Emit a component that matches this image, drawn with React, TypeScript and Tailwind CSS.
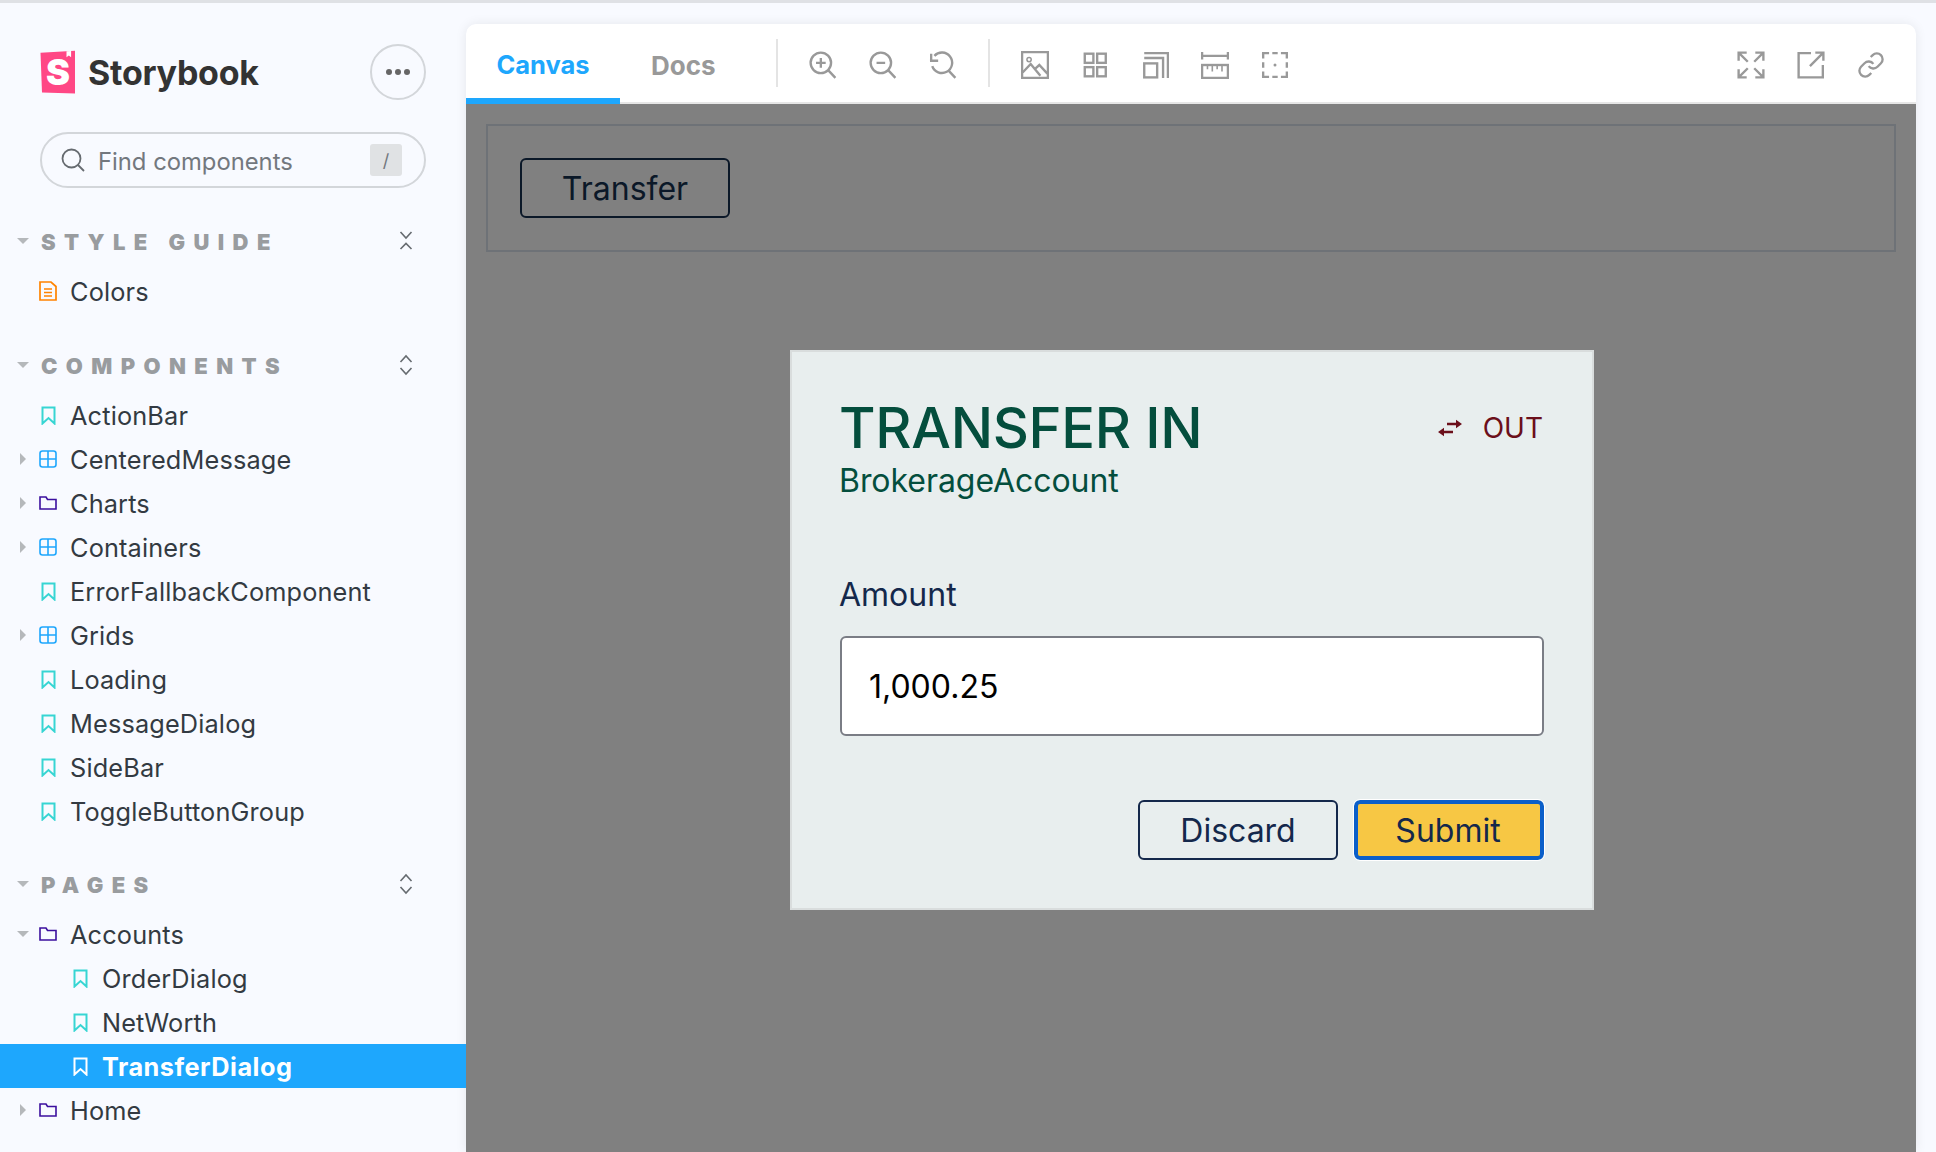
import type { ReactNode } from 'react';

const inter = { fontFamily: 'Inter, sans-serif' };

function Svg({ children }: { children: ReactNode }) {
  return (
    <svg width="28" height="28" viewBox="0 0 26 26" fill="none" stroke="currentColor" strokeWidth="2.2" className="shrink-0">
      {children}
    </svg>
  );
}

function Bookmark({ white }: { white?: boolean }) {
  return (
    <svg width="15" height="19" viewBox="0 0 15 19" fill="none" stroke={white ? '#ffffff' : '#37d5d3'} strokeWidth="2" className="shrink-0">
      <path d="M1.500 1.500h12v16l-6-5.500-6 5.500z" />
    </svg>
  );
}

function Component() {
  return (
    <svg width="18" height="18" viewBox="0 0 18 18" fill="none" stroke="#1ea7fd" strokeWidth="1.600" className="shrink-0">
      <rect x="1" y="1" width="16" height="16" rx="2.500" />
      <path d="M9 1v16M1 9h16" />
    </svg>
  );
}

function Folder() {
  return (
    <svg width="18" height="16" viewBox="0 0 18 16" fill="none" stroke="#3b0f9e" strokeWidth="1.600" className="shrink-0">
      <path d="M1 2h6l1.500 2.500H17V14H1z" />
    </svg>
  );
}

function Doc() {
  return (
    <svg width="18" height="20" viewBox="0 0 18 20" fill="none" stroke="#ff8300" strokeWidth="1.700" className="shrink-0">
      <path d="M1 1h11l5 4.500V19H1z" />
      <path d="M5 8h8M5 11.500h8M5 15h8" />
    </svg>
  );
}

function Caret({ open }: { open?: boolean }) {
  if (open) {
    return <span className="block w-0 h-0 border-x-[6px] border-x-transparent border-t-[6px] border-t-[#b5b8bb]" />;
  }
  return <span className="block w-0 h-0 border-y-[6px] border-y-transparent border-l-[6px] border-l-[#b5b8bb]" />;
}

type Row = { label: string; kind: 'story' | 'component' | 'folder' | 'doc'; caret?: boolean; open?: boolean; child?: boolean; active?: boolean };

function TreeRow({ row }: { row: Row }) {
  return (
    <div className={`h-[44px] flex items-center relative ${row.active ? 'bg-[#1ea7fd] text-white font-bold tracking-[0.5px]' : 'text-[#333a42] tracking-[0.15px]'} ${row.child ? 'pl-[71px]' : 'pl-[39px]'}`}>
      {row.caret && (
        <span className="absolute left-[17px] top-0 bottom-0 w-[12px] flex items-center justify-center">
          <Caret open={row.open} />
        </span>
      )}
      <span className="w-[18px] flex justify-center">
        {row.kind === 'story' && <Bookmark white={row.active} />}
        {row.kind === 'component' && <Component />}
        {row.kind === 'folder' && <Folder />}
        {row.kind === 'doc' && <Doc />}
      </span>
      <span className="ml-[13px] pt-[1px] text-[25.3px]">{row.label}</span>
    </div>
  );
}

function SectionHeader({ label, collapse }: { label: string; collapse?: boolean }) {
  return (
    <div className="h-[44px] flex items-center relative pl-[41px] pr-[53px] justify-between">
      <span className="absolute left-[17px] top-[18px]">
        <Caret open />
      </span>
      <span className="text-[22px] font-black text-[#999c9f] tracking-[8.4px] whitespace-pre">{label}</span>
      <svg width="14" height="22" viewBox="0 0 14 22" fill="none" stroke="#666b70" strokeWidth="1.600" className="shrink-0 -mt-[3px]">
        {collapse ? <path d="M1.500 2l5.500 6 5.500-6M1.500 19l5.500-5.500 5.500 5.500" /> : <path d="M1.500 8l5.500-6 5.500 6M1.500 14l5.500 6 5.500-6" />}
      </svg>
    </div>
  );
}

const components: Row[] = [
  { label: 'ActionBar', kind: 'story' },
  { label: 'CenteredMessage', kind: 'component', caret: true },
  { label: 'Charts', kind: 'folder', caret: true },
  { label: 'Containers', kind: 'component', caret: true },
  { label: 'ErrorFallbackComponent', kind: 'story' },
  { label: 'Grids', kind: 'component', caret: true },
  { label: 'Loading', kind: 'story' },
  { label: 'MessageDialog', kind: 'story' },
  { label: 'SideBar', kind: 'story' },
  { label: 'ToggleButtonGroup', kind: 'story' },
];

const pages: Row[] = [
  { label: 'Accounts', kind: 'folder', caret: true, open: true },
  { label: 'OrderDialog', kind: 'story', child: true },
  { label: 'NetWorth', kind: 'story', child: true },
  { label: 'TransferDialog', kind: 'story', child: true, active: true },
  { label: 'Home', kind: 'folder', caret: true },
];

function Sidebar() {
  return (
    <aside className="w-[466px] shrink-0 pt-[41px]">
      <div className="flex items-center justify-between pl-[40px] pr-[40px] h-[56px]">
        <div className="flex items-center gap-[12px]">
          <svg width="36" height="44" viewBox="0 0 36 44" className="shrink-0">
            <path d="M0.500 2.800 35 0.800V43.500L2 42.500z" fill="#ff4785" />
            <path d="M26.500 1.300v6l2.300-1.800 2.300 1.800V1z" fill="#ffffff" />
            <text x="18" y="35" textAnchor="middle" fontSize="36" fontWeight="900" fill="#ffffff" fontFamily="Inter, sans-serif">S</text>
          </svg>
          <span className="text-[34px] font-bold tracking-[-0.25px] text-[#333333]">Storybook</span>
        </div>
        <div className="w-[56px] h-[56px] rounded-full border-2 border-[#d3d6da] flex items-center justify-center gap-[3px]">
          <span className="w-[6px] h-[6px] rounded-full bg-[#666666]" />
          <span className="w-[6px] h-[6px] rounded-full bg-[#666666]" />
          <span className="w-[6px] h-[6px] rounded-full bg-[#666666]" />
        </div>
      </div>

      <div className="mx-[40px] mt-[32px] h-[56px] rounded-full border-2 border-[#d3d6da] flex items-center pl-[19px] pr-[22px]">
        <svg width="24" height="24" viewBox="0 0 24 24" fill="none" stroke="#666b70" strokeWidth="1.800" className="shrink-0">
          <circle cx="10.500" cy="10.500" r="9" />
          <path d="M17 17l6 6" />
        </svg>
        <span className="ml-[13px] pt-[3px] flex-1 text-[23.800px] text-[#73787e]">Find components</span>
        <span className="w-[32px] h-[32px] rounded-[3px] bg-[#e0e2e4] flex items-center justify-center text-[18px] text-[#73787e]">/</span>
      </div>

      <div className="mt-[32px]">
        <SectionHeader label="STYLE GUIDE" collapse />
      </div>
      <div className="mt-[5px]">
        <TreeRow row={{ label: 'Colors', kind: 'doc' }} />
      </div>

      <div className="mt-[31px]">
        <SectionHeader label="COMPONENTS" />
      </div>
      <div className="mt-[5px]">
        {components.map((row) => (
          <TreeRow key={row.label} row={row} />
        ))}
      </div>

      <div className="mt-[30px]">
        <SectionHeader label="PAGES" />
      </div>
      <div className="mt-[5px]">
        {pages.map((row) => (
          <TreeRow key={row.label} row={row} />
        ))}
      </div>
    </aside>
  );
}

function Toolbar() {
  return (
    <div className="h-[80px] shrink-0 bg-white rounded-t-[10px] border-b-[2px] border-[#e6e6e6] flex items-stretch text-[#999999]">
      <div className="w-[154px] -mb-[2px] border-b-[6px] border-[#1ea7fd] pt-[8px] flex items-center justify-center text-[25.500px] font-bold text-[#1ea7fd]">Canvas</div>
      <div className="w-[156px] flex items-center pl-[31px] pt-[5px] text-[26px] font-bold">Docs</div>
      <div className="w-[2px] h-[48px] bg-[#e4e4e4] self-center" />
      <div className="flex items-center gap-[32px] ml-[31px] pt-[3px]">
        <Svg>
          <circle cx="11" cy="11" r="9.500" />
          <path d="M18 18l6.500 7M11 6.500v9M6.500 11h9" />
        </Svg>
        <Svg>
          <circle cx="11" cy="11" r="9.500" />
          <path d="M18 18l6.500 7M7 11h8" />
        </Svg>
        <Svg>
          <path d="M5 4.500A9.500 9.500 0 1 1 3 14" />
          <path d="M18 18l6.500 7" />
          <path d="M2 2.500v6.500h6.500" />
        </Svg>
      </div>
      <div className="w-[2px] h-[48px] bg-[#e4e4e4] self-center ml-[31px]" />
      <div className="flex items-center gap-[32px] ml-[31px] pt-[3px]">
        <Svg>
          <rect x="1" y="1" width="24" height="24" />
          <circle cx="7.500" cy="8" r="2" strokeWidth="1.400" />
          <path d="M1.500 20 9 12l9 11M13 16.500l4-3.500 7.500 8" />
        </Svg>
        <Svg>
          <rect x="3.500" y="2.500" width="8" height="8.500" />
          <rect x="15" y="2.500" width="8" height="8.500" />
          <rect x="3.500" y="15" width="8" height="8.500" />
          <rect x="15" y="15" width="8" height="8.500" />
        </Svg>
        <Svg>
          <rect x="3" y="11.500" width="12" height="13" />
          <path d="M3 6.500h17.500V25M3 2h22v23" />
        </Svg>
        <Svg>
          <path d="M1 1v7M25 1v7" />
          <path d="M1 4.500h24" />
          <rect x="1" y="13" width="24" height="12" />
          <path d="M6 13v4M10.500 13v6M15 13v4M19.500 13v6" strokeWidth="1.500" />
        </Svg>
        <Svg>
          <path d="M7.500 2H2v5M18.500 2H24v5M2 10.500v5M24 10.500v5M2 19v5h5.500M24 19v5h-5.500M10.500 2h5M10.500 24h5" />
          <circle cx="13" cy="13" r="1.400" fill="currentColor" stroke="none" />
        </Svg>
      </div>
      <div className="flex-1" />
      <div className="flex items-center gap-[32px] pr-[31px] pt-[3px]">
        <Svg>
          <path d="M1.500 9V1.500H9M1.500 1.500 10 10M24.500 9V1.500H17M24.500 1.500 16 10M1.500 17v7.500H9M1.500 24.500 10 16M24.500 17v7.500H17M24.500 24.500 16 16" />
        </Svg>
        <Svg>
          <path d="M13 2H1.500v22.500H24V13M17 1.500h7.500V9M24 2 12 14" />
        </Svg>
        <svg width="28" height="28" viewBox="0 0 24 24" fill="none" stroke="currentColor" strokeWidth="2" className="shrink-0">
          <path d="M10 13a5 5 0 0 0 7.540.54l3-3a5 5 0 0 0-7.070-7.070l-1.720 1.710" />
          <path d="M14 11a5 5 0 0 0-7.540-.54l-3 3a5 5 0 0 0 7.070 7.070l1.710-1.710" />
        </svg>
      </div>
    </div>
  );
}

function Dialog() {
  return (
    <div className="absolute left-[324px] top-[246px] w-[804px] h-[560px] bg-[#e8eeee] border-2 border-[#d9dddd] pl-[48px] pr-[48px] pt-[44px]">
      <div className="flex items-start justify-between">
        <div>
          <div className="text-[56px] leading-[64px] font-[550] text-[#044e3d] -ml-[1px] tracking-[-0.3px]">TRANSFER IN</div>
          <div className="text-[32px] leading-[41px] text-[#044e3d] -ml-[1px] tracking-[-0.05px]">BrokerageAccount</div>
        </div>
        <div className="flex items-center h-[64px] mr-[1px] text-[#6b0f1a] text-[28px]">
          <svg width="24" height="20" viewBox="0 0 24 20" fill="currentColor" className="shrink-0">
            <path d="M9 4.800h9V1.800l6 4.200-6 4.200V7.200H9z" />
            <path d="M15 12.800H6V9.800l-6 4.200 6 4.200v-3h9z" />
          </svg>
          <span className="ml-[21px]">OUT</span>
        </div>
      </div>

      <div className="mt-[74px] -ml-[1px] text-[32px] leading-[40px] text-[#14284b]">Amount</div>
      <div className="mt-[21px] h-[100px] rounded-[6px] border-2 border-[#7a7d85] bg-white flex items-center pl-[27px] pt-[2px] text-[32px] text-black">1,000.25</div>

      <div className="mt-[64px] -ml-[1px] flex justify-end gap-[16px]">
        <div className="w-[200px] h-[60px] rounded-[6px] border-2 border-[#14284b] text-[#14284b] text-[32px] pt-[2px] flex items-center justify-center">Discard</div>
        <div className="w-[190px] h-[60px] rounded-[6px] border-[4px] border-[#0b5fc9] bg-[#f7c744] text-[#14284b] text-[32px] pt-[2px] pr-[2px] flex items-center justify-center outline outline-[1px] outline-white">Submit</div>
      </div>
    </div>
  );
}

function Canvas() {
  return (
    <div className="flex-1 bg-[#808080] relative p-[20px]">
      <div className="h-[128px] border-2 border-[#6e7277] flex items-center pl-[32px]">
        <div className="w-[210px] h-[60px] rounded-[6px] border-2 border-[#0b1828] text-[#0b1828] text-[32px] pt-[2px] flex items-center justify-center">Transfer</div>
      </div>
      <Dialog />
    </div>
  );
}

export default function App() {
  return (
    <div className="h-screen w-full overflow-hidden bg-[#f8faff] border-t-[3px] border-[#dfe1e5] flex" style={inter}>
      <Sidebar />
      <main className="flex-1 flex flex-col mt-[21px] mr-[20px] rounded-t-[10px] shadow-[0_0_12px_rgba(0,0,0,0.08)] overflow-hidden">
        <Toolbar />
        <Canvas />
      </main>
    </div>
  );
}
